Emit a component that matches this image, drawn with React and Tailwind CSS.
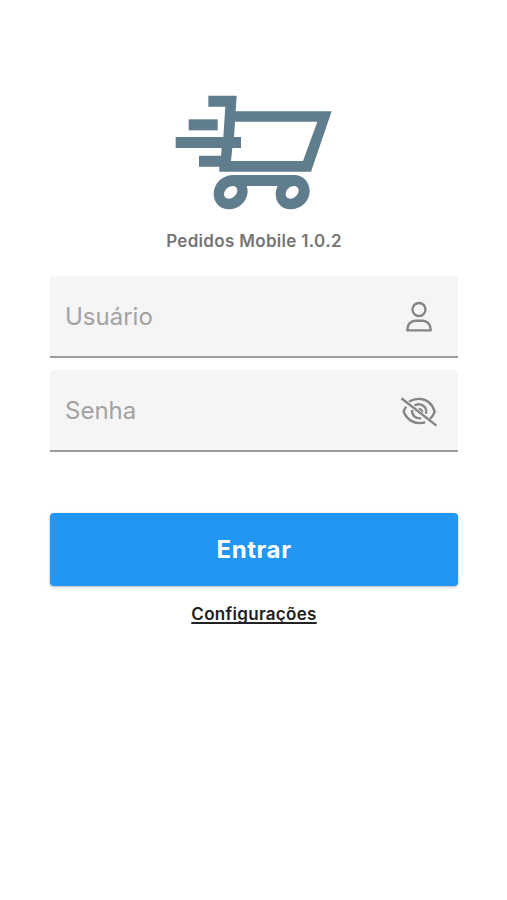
import { useState } from 'react';

// --- LOGO ---
function CartLogo() {
  return (
    <svg className="w-[180px] h-[135px] ml-[2px]" viewBox="0 0 540 405" fill="#5f7d8c">
      <path d="M130 32H215L212 79H500L438 260H163V245H102V212H168L170 189H32V156H175L181 65H130ZM210 110L207 156H228V189H202L198 228H414L457 110Z" fillRule="evenodd" />
      <path d="M71 103H158V136H71Z" />
      <path d="M202 270H386C416 270 434 292 434 319C434 349 408 373 377 373C349 373 332 352 332 326C332 317 335 309 338 303H245C247 309 248 314 248 320C246 350 221 373 192 373C164 373 146 352 146 327C146 296 171 271 202 270ZM203 303C190 303 177 315 177 328C177 336 183 341 191 341C205 341 217 329 217 316C217 308 211 303 203 303ZM387 303C374 303 362 315 362 328C362 336 368 341 376 341C389 341 401 329 401 316C401 308 395 303 387 303Z" fillRule="evenodd" />
    </svg>
  );
}

function PersonIcon() {
  return (
    <svg className="w-[38px] h-[38px] mt-0.5" viewBox="0 0 38 38" fill="none" stroke="#858585" strokeWidth="2.4" strokeLinejoin="round">
      <circle cx="19" cy="11.5" r="6.5" />
      <path d="M7.4 32.4V31C7.4 26 11 22.8 15.5 22.8H22.5C27 22.8 30.6 26 30.6 31V32.4Z" />
    </svg>
  );
}

function EyeOffIcon() {
  return (
    <svg className="w-[42px] h-[42px] mt-[3px]" viewBox="0 0 42 42" fill="none" stroke="#858585" strokeWidth="2.4">
      <path d="M3.4 7.3L38.4 34.6" />
      <path d="M11.2 10.6C14 8.8 17.5 7.7 21.5 7.9C28.5 8.3 34.3 13 36.7 20.6C35.7 23.6 34.2 25.9 32 28" />
      <path d="M8.3 15.8C7 17.2 5.9 19 5.7 20.8C9.3 29.6 17.5 34 27.2 31.4" />
      <path d="M16.5 14.6C18 13.6 20 13 22 13.4C26.8 14.1 29.2 18 28 22.8" />
      <path d="M14 19C13.8 24.2 17.3 27.8 23 27.3" />
      <path d="M20.6 17.4C23.4 17.2 25 18.8 24.9 21.4Z" fill="#858585" strokeWidth="1" />
    </svg>
  );
}

export default function App() {
  const [formData, setFormData] = useState({ usuario: '', senha: '' });
  const [showPassword, setShowPassword] = useState(false);

  const handleChange = (e) => {
    setFormData({ ...formData, [e.target.name]: e.target.value });
  };

  return (
    <div className="min-h-screen bg-white font-[Inter,sans-serif] flex flex-col items-center pt-[85px] pl-[50px] pr-[49px]">
      <CartLogo />
      <h1 className="mt-[11px] text-[17px] leading-5 font-semibold tracking-[0.32px] text-[#757575]">
        Pedidos Mobile 1.0.2
      </h1>

      <form className="w-full mt-[25px]" onSubmit={(e) => e.preventDefault()}>
        {/* USUÁRIO */}
        <div className="flex items-center h-[82px] pl-[15px] pr-5 bg-[#f5f5f5] border-b-2 border-[#9c9c9c] rounded-t-[4px]">
          <input
            name="usuario"
            placeholder="Usuário"
            value={formData.usuario}
            onChange={handleChange}
            className="flex-1 min-w-0 h-10 text-[24px] text-gray-900 outline-none placeholder:text-[#a2a2a2]"
          />
          <PersonIcon />
        </div>

        {/* SENHA */}
        <div className="mt-3 flex items-center h-[82px] pl-[15px] pr-[18px] bg-[#f5f5f5] border-b-2 border-[#9c9c9c] rounded-t-[4px]">
          <input
            name="senha"
            type={showPassword ? 'text' : 'password'}
            placeholder="Senha"
            value={formData.senha}
            onChange={handleChange}
            className="flex-1 min-w-0 h-10 text-[24px] text-gray-900 outline-none placeholder:text-[#a2a2a2]"
          />
          <button type="button" onClick={() => setShowPassword(!showPassword)}>
            <EyeOffIcon />
          </button>
        </div>

        <button type="submit" className="mt-[61px] w-full h-[73px] rounded-[4px] bg-[#2196f3] text-white text-[24px] tracking-[0.6px] font-bold shadow-[0_1px_3px_rgba(0,0,0,0.3)]">
          Entrar
        </button>
      </form>

      <a href="#" className="mt-[18px] text-[17px] leading-5 font-semibold tracking-[0.3px] text-[#212121] underline decoration-[1.5px] underline-offset-[2px] [text-decoration-skip-ink:none]">
        Configurações
      </a>
    </div>
  );
}
